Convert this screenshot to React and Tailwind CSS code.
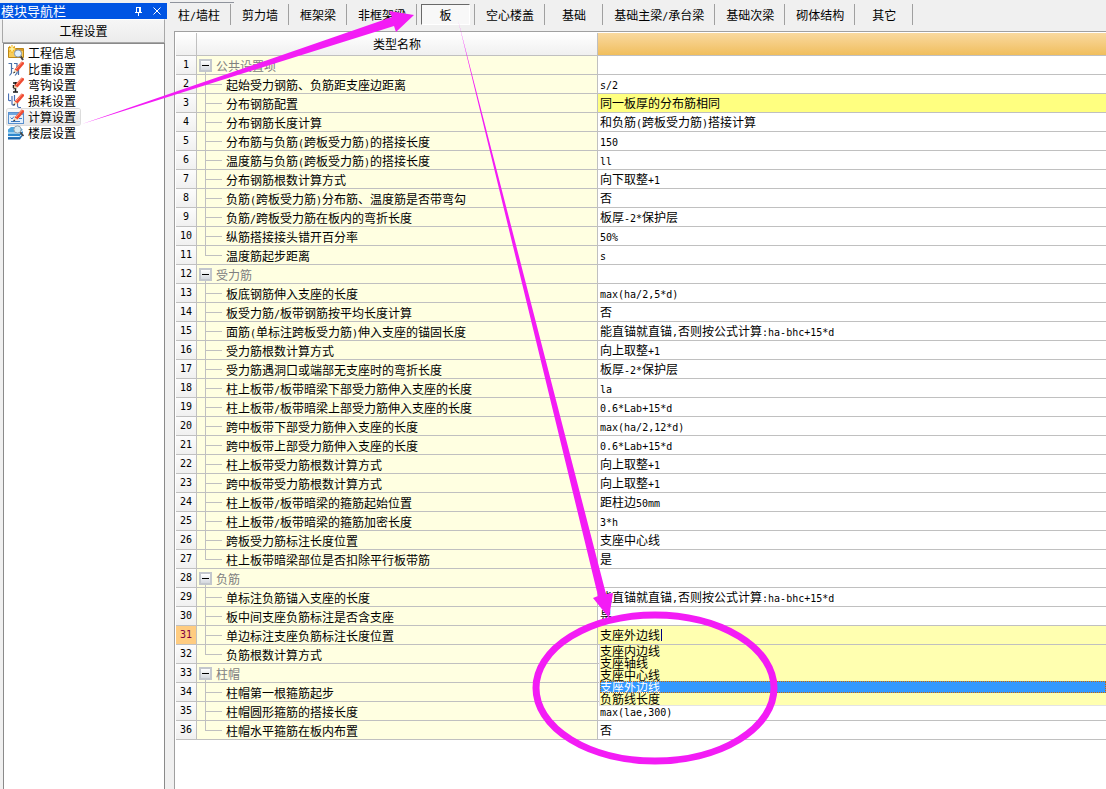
import { useState } from "react";

const TABS = ["柱/墙柱", "剪力墙", "框架梁", "非框架梁", "板", "空心楼盖", "基础", "基础主梁/承台梁", "基础次梁", "砌体结构", "其它"];

const GROUPS = [
    {
        name: "公共设置项",
        rows: [
            ["起始受力钢筋、负筋距支座边距离", "s/2"],
            ["分布钢筋配置", "同一板厚的分布筋相同"],
            ["分布钢筋长度计算", "和负筋(跨板受力筋)搭接计算"],
            ["分布筋与负筋(跨板受力筋)的搭接长度", "150"],
            ["温度筋与负筋(跨板受力筋)的搭接长度", "ll"],
            ["分布钢筋根数计算方式", "向下取整+1"],
            ["负筋(跨板受力筋)分布筋、温度筋是否带弯勾", "否"],
            ["负筋/跨板受力筋在板内的弯折长度", "板厚-2*保护层"],
            ["纵筋搭接接头错开百分率", "50%"],
            ["温度筋起步距离", "s"],
        ],
    },
    {
        name: "受力筋",
        rows: [
            ["板底钢筋伸入支座的长度", "max(ha/2,5*d)"],
            ["板受力筋/板带钢筋按平均长度计算", "否"],
            ["面筋(单标注跨板受力筋)伸入支座的锚固长度", "能直锚就直锚,否则按公式计算:ha-bhc+15*d"],
            ["受力筋根数计算方式", "向上取整+1"],
            ["受力筋遇洞口或端部无支座时的弯折长度", "板厚-2*保护层"],
            ["柱上板带/板带暗梁下部受力筋伸入支座的长度", "la"],
            ["柱上板带/板带暗梁上部受力筋伸入支座的长度", "0.6*Lab+15*d"],
            ["跨中板带下部受力筋伸入支座的长度", "max(ha/2,12*d)"],
            ["跨中板带上部受力筋伸入支座的长度", "0.6*Lab+15*d"],
            ["柱上板带受力筋根数计算方式", "向上取整+1"],
            ["跨中板带受力筋根数计算方式", "向上取整+1"],
            ["柱上板带/板带暗梁的箍筋起始位置", "距柱边50mm"],
            ["柱上板带/板带暗梁的箍筋加密长度", "3*h"],
            ["跨板受力筋标注长度位置", "支座中心线"],
            ["柱上板带暗梁部位是否扣除平行板带筋", "是"],
        ],
    },
    {
        name: "负筋",
        rows: [
            ["单标注负筋锚入支座的长度", "能直锚就直锚,否则按公式计算:ha-bhc+15*d"],
            ["板中间支座负筋标注是否含支座", "是"],
            ["单边标注支座负筋标注长度位置", "支座外边线"],
            ["负筋根数计算方式", ""],
        ],
    },
    {
        name: "柱帽",
        rows: [
            ["柱帽第一根箍筋起步", ""],
            ["柱帽圆形箍筋的搭接长度", "max(lae,300)"],
            ["柱帽水平箍筋在板内布置", "否"],
        ],
    },
];

const OPTIONS = ["支座内边线", "支座轴线", "支座中心线", "支座外边线", "负筋线长度"];

// number the rows once, groups included
let counter = 0;
const DATA = GROUPS.map((g) => ({
    name: g.name,
    no: ++counter,
    rows: g.rows.map(([name, value]) => ({ no: ++counter, name, value })),
}));

const EDIT_ROW = 31;
const CHANGED_ROW = 3;

// latin runs take half the width of a chinese character
function Mixed({ text }) {
    return text.split(/([\x20-\x7e]+)/).map((part, i) =>
        i % 2 ? (
            <span key={i} className="font-['DejaVu_Sans_Mono'] text-[10px] leading-none">{part}</span>
        ) : (
            part
        )
    );
}

function Pencil() {
    return (
        <>
            <path d="M6.5 8.5 L13.5 0.5 L16 1.5 L16 3 L9.5 10.5 Z" fill="#ef4b32" />
            <path d="M8 8 L14.2 1" stroke="#ff9c84" strokeWidth="1" />
            <path d="M6.5 8.5 L5.5 12 L9.5 10.5 Z" fill="#f3d9b0" />
            <path d="M5 12.5 L6 10.4 L7.4 11.6 Z" fill="#222" />
        </>
    );
}

const ICONS = {
    info: (
        <>
            <path d="M0.5 2.5h6l1 1h8v9h-15z" fill="#f7cc5a" stroke="#b98516" />
            <path d="M7 4h8v2H7z" fill="#d99a2b" />
            <path d="M4 0v8M0 4h8M1.2 1.2l5.6 5.6M6.8 1.2l-5.6 5.6" stroke="#f2b21f" strokeWidth="1.2" />
            <path d="M4 1.5v5M1.5 4h5" stroke="#fff6a8" strokeWidth="1.6" />
            <path d="M12.5 11l2.5 4" stroke="#444" strokeWidth="2" />
            <circle cx="10" cy="8.5" r="3.6" fill="#e0f0fc" stroke="#8293a6" />
        </>
    ),
    weight: (
        <>
            <path d="M0.5 2.5h3v9.5l-2 2.5M6 2.5h3v9.5l-2 2.5M3.5 7.5h2M10.5 8v6" fill="none" stroke="#4a70a8" strokeWidth="1.2" />
            <Pencil />
        </>
    ),
    hook: (
        <>
            <path d="M7.5 5v10M5 6h4M5 15h5M5.5 8v3" fill="none" stroke="#1a1a1a" strokeWidth="1.5" />
            <Pencil />
        </>
    ),
    loss: (
        <>
            <path d="M0.5 0.5v6q0 1.5 2.5 1M4 3v8q0 1.5 3 1M6.5 2v6M9.5 8v5q0 1.8 3.5 1.5" fill="none" stroke="#4a70b4" strokeWidth="1.2" />
            <Pencil />
        </>
    ),
    calc: (
        <>
            <rect x="0.5" y="3.5" width="15" height="11" fill="#e4f0fc" stroke="#5a90ce" />
            <path d="M1 4h14v2H1z" fill="#6fa6e0" />
            <path d="M2.5 8.5l1.5 1.5 2-2.5M3 12.5h9M11 9.5h3" stroke="#3f7cc4" fill="none" />
            <Pencil />
        </>
    ),
    floor: (
        <>
            <path d="M0 12l3-2h12l-3 4.5H0z" fill="#1f66ad" />
            <path d="M0 8.5l3-2h12v2l-3 4H0z" fill="#2f87cc" />
            <path d="M0 4.5l3-2.5h9l3 3-3 4H0z" fill="#4fa5de" />
            <path d="M0 8h11.5l3.5-3M0 11.5h11.5l3.5-3" stroke="#e4f5ff" fill="none" />
            <path d="M12 7l3.5 4" stroke="#444" strokeWidth="1.8" />
            <circle cx="9.5" cy="4.5" r="3.6" fill="#d9ebf2" stroke="#93a1ad" />
        </>
    ),
};

const NAV = [
    ["info", "工程信息"],
    ["weight", "比重设置"],
    ["hook", "弯钩设置"],
    ["loss", "损耗设置"],
    ["calc", "计算设置"],
    ["floor", "楼层设置"],
];

function Sidebar() {
    return (
        <aside className="flex w-[167px] shrink-0 flex-col pt-[3px]">
            <div className="flex h-4 items-center bg-[#0054e3] pl-px text-[13px] leading-4 text-white">
                <span className="flex-1">模块导航栏</span>
                <button aria-label="固定" className="mr-2.5">
                    <svg width="9" height="9" viewBox="0 0 9 9" className="block" fill="none" stroke="#fff">
                        <path d="M2 0.5h5M2.5 0v5M6.5 0v5M5.5 0v5M1 5.5h7M4.5 6v3" />
                    </svg>
                </button>
                <button aria-label="关闭" className="mr-1.5">
                    <svg width="8" height="8" viewBox="0 0 8 8" className="block" fill="none" stroke="#fff">
                        <path d="M0.5 0.5l7 7M7.5 0.5l-7 7" />
                    </svg>
                </button>
            </div>
            <button className="mx-0.5 h-6 border border-[#a8a8a8] border-t-white bg-linear-to-b from-[#f6f6f6] to-[#ececec]">工程设置</button>
            <ul className="mr-0.5 ml-[3px] flex-1 border border-b-0 border-[#8a8a8a] bg-white pt-px pl-[3px]">
                {NAV.map(([icon, label]) => (
                    <li key={icon} className="flex h-4">
                        <button
                            className={
                                icon === "calc"
                                    ? "flex items-center gap-1 rounded-xs bg-linear-to-b from-[#fafafa] to-[#e8e8e8] pr-1 pl-px ring-1 ring-[#dcdcdc]"
                                    : "flex items-center gap-1 pr-1 pl-px"
                            }
                        >
                            <svg width="16" height="16" viewBox="0 0 16 16">{ICONS[icon]}</svg>
                            {label}
                        </button>
                    </li>
                ))}
            </ul>
        </aside>
    );
}

function Tabs() {
    return (
        <div className="h-[31px] pt-0.5">
            <div className="ml-[3px] h-px w-16 bg-[#8f939c]" />
            <nav className="mt-px flex">
                {TABS.map((tab) => (
                    <div key={tab} className="flex h-[21px] min-w-[58px] shrink-0 border-r border-[#a0a0a0]">
                        {tab === "板" ? (
                            <button className="mx-1 flex-1 border border-t-[#696969] border-r-white border-b-white border-l-[#696969] bg-[#f8f8f8]">{tab}</button>
                        ) : (
                            <button className="flex-1 pr-2.5 pl-[11px] whitespace-nowrap"><Mixed text={tab} /></button>
                        )}
                    </div>
                ))}
            </nav>
        </div>
    );
}

function RowNumber({ no }) {
    return (
        <th
            className={
                no === EDIT_ROW
                    ? "border-r border-b border-[#c0c0c0] bg-[#ffcc80] p-0 font-['DejaVu_Sans_Mono'] text-[10px] font-normal text-[#800040]"
                    : "border-r border-b border-[#c0c0c0] bg-linear-to-b from-[#fcfcfc] to-[#f0f0f0] p-0 font-['DejaVu_Sans_Mono'] text-[10px] font-normal"
            }
        >
            {no}
        </th>
    );
}

function Picker({ initial }) {
    const [value, setValue] = useState(initial);
    return (
        <div className="relative flex h-[18px] items-center bg-[#ffffb0] pl-0.5">
            <input
                aria-label="单边标注支座负筋标注长度位置"
                value={value}
                onChange={(e) => setValue(e.target.value)}
                className="w-[61px] bg-transparent outline-none"
            />
            <span className="h-3 w-px bg-[#000080]" />
            <ul role="listbox" className="absolute top-[19px] right-0 left-px z-10 border-b border-l border-[#e4e4e4] bg-[#ffffb0] leading-3">
                {OPTIONS.map((o) => (
                    <li
                        key={o}
                        role="option"
                        aria-selected={o === value}
                        onClick={() => setValue(o)}
                        className={o === value ? "h-3 bg-[#3399ff] text-white outline-1 -outline-offset-1 outline-dotted outline-[#cc6600]" : "h-3"}
                    >
                        {o}
                    </li>
                ))}
            </ul>
        </div>
    );
}

function Group({ group }) {
    const [open, setOpen] = useState(true);
    return (
        <tbody>
            <tr className="h-[19px]">
                <RowNumber no={group.no} />
                <td className="border-r border-b border-[#c0c0c0] bg-[#ffffe1] p-0">
                    <div className="flex h-[18px] pl-0.5 text-[#808080]">
                        <span className="flex w-[13px] flex-col items-center pt-[3px]">
                            <button
                                aria-label={group.name}
                                aria-expanded={open}
                                onClick={() => setOpen(!open)}
                                className="flex size-[13px] shrink-0 items-center justify-center border-2 border-[#c3c7cd] bg-linear-to-b from-white to-[#d4d8de]"
                            >
                                <span className="h-px w-[7px] bg-black" />
                            </button>
                            <span className="w-px flex-1 bg-[#c0c0c0]" />
                        </span>
                        <span className="pl-1 leading-5">{group.name}</span>
                    </div>
                </td>
                <td className="border-b border-[#c0c0c0] p-0" />
            </tr>
            {open &&
                group.rows.map((row, i) => (
                    <tr key={row.no} className="h-[19px]">
                        <RowNumber no={row.no} />
                        <td className="border-r border-b border-[#c0c0c0] bg-[#ffffe1] p-0">
                            <div className="flex h-[18px] pl-2">
                                <span className="flex w-[17px] flex-col">
                                    <span className="h-2.5 border-b border-l border-[#c0c0c0]" />
                                    {i < group.rows.length - 1 && <span className="flex-1 border-l border-[#c0c0c0]" />}
                                </span>
                                <span className="pl-1 leading-5 whitespace-nowrap"><Mixed text={row.name} /></span>
                            </div>
                        </td>
                        <td className={row.no === CHANGED_ROW ? "border-b border-[#c0c0c0] bg-[#ffff80] p-0" : "border-b border-[#c0c0c0] p-0"}>
                            {row.no === EDIT_ROW ? (
                                <Picker initial={row.value} />
                            ) : (
                                <div className="h-[18px] pl-0.5 leading-[18px] whitespace-nowrap"><Mixed text={row.value} /></div>
                            )}
                        </td>
                    </tr>
                ))}
        </tbody>
    );
}

// arrows and the ring drawn over the window
function Marks() {
    return (
        <svg width="1106" height="789" viewBox="0 0 1106 789" className="pointer-events-none absolute top-0 left-0 z-20" fill="#f31cf5">
            <path d="M82 124 L392 17 L389 11 L414 15 L396 32 L394 26 Z" />
            <path d="M458 20 L606 594 L613 593 L609 618 L593 598 L598 596 Z" />
            <ellipse cx="655" cy="688" rx="119" ry="73" fill="none" stroke="#f31cf5" strokeWidth="7" />
        </svg>
    );
}

export default function App() {
    return (
        <div className="relative flex h-screen overflow-hidden bg-[#f0f0f0] font-['Noto_Sans_CJK_SC',sans-serif] text-[12px] leading-4 text-black">
            <Sidebar />
            <main className="flex min-w-0 flex-1 flex-col">
                <Tabs />
                <div className="ml-[7px] flex-1 border-t border-l border-[#a0a0a0] bg-white pt-px pl-px">
                    <table className="w-full table-fixed border-separate border-spacing-0">
                        <colgroup>
                            <col className="w-[21px]" />
                            <col className="w-[401px]" />
                            <col />
                        </colgroup>
                        <thead>
                            <tr className="h-[23px]">
                                <th className="border-r border-b border-[#c0c0c0] bg-linear-to-b from-white to-[#f0f0f0] p-0" />
                                <th className="border-r border-b border-[#c0c0c0] bg-linear-to-b from-white to-[#f0f0f0] p-0 font-normal">类型名称</th>
                                <th className="border-b border-[#c0c0c0] bg-linear-to-b from-[#f9d99e] to-[#f0be5c] p-0" />
                            </tr>
                        </thead>
                        {DATA.map((g) => (
                            <Group key={g.no} group={g} />
                        ))}
                    </table>
                </div>
            </main>
            <Marks />
        </div>
    );
}
